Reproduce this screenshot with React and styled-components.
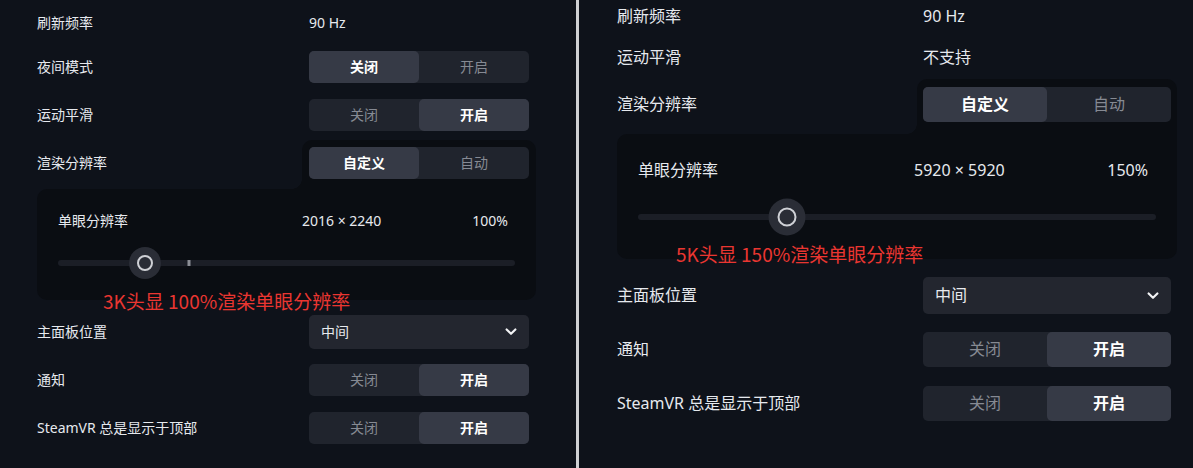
import React from 'react';
import styled, { createGlobalStyle, ThemeProvider } from 'styled-components';

const GlobalStyle = createGlobalStyle`
  html, body {
    margin: 0;
    padding: 0;
    background: #0e121a;
  }
  body {
    font-family: "Noto Sans", "Noto Sans CJK SC", sans-serif;
  }
`;

// metrics for each screenshot half
const compact = {
  font: 14,
  padTop: 11,
  padLeft: 37,
  gap: 16,
  textH: 24,
  labelW: 272,
  ctlW: 220,
  ctlH: 32,
  tabPad: 7,
  tabBelow: 10,
  side: 7,
  boxPadTop: 22,
  boxPadX: 21,
  boxPadBottom: 21,
  headH: 20,
  valueCol: 244,
  pctRight: 7,
  sliderGap: 16,
  thumb: 32,
  ring: 16,
};

const roomy = {
  font: 16,
  padTop: 5,
  padLeft: 38,
  gap: 19,
  textH: 22,
  labelW: 306,
  ctlW: 248,
  ctlH: 35,
  tabPad: 8,
  tabBelow: 12,
  side: 6,
  boxPadTop: 25,
  boxPadX: 21,
  boxPadBottom: 24,
  headH: 22,
  valueCol: 276,
  pctRight: 8,
  sliderGap: 17,
  thumb: 37,
  ring: 19,
};

const Screen = styled.div`
  display: flex;
  width: 1193px;
  height: 468px;
  overflow: hidden;
  background: #0e121a;
`;

const Panel = styled.section`
  flex: none;
  width: ${p => p.$width}px;
  box-sizing: border-box;
  padding: ${p => p.theme.padTop}px 0 0 ${p => p.theme.padLeft}px;
  display: flex;
  flex-direction: column;
  gap: ${p => p.theme.gap}px;
  font-size: ${p => p.theme.font}px;
  line-height: 1.3;
  color: #e6e9ee;
`;

const Divider = styled.div`
  flex: none;
  width: 3px;
  background: #cfd0d3;
`;

const Row = styled.div`
  display: flex;
  align-items: center;
  height: ${p => (p.$text ? p.theme.textH : p.theme.ctlH)}px;
`;

const Label = styled.div`
  flex: none;
  width: ${p => p.theme.labelW}px;
  white-space: nowrap;
`;

const TabLabel = styled(Label)`
  padding-bottom: ${p => p.theme.tabBelow - p.theme.tabPad}px;
`;

const Value = styled.div`
  white-space: nowrap;
`;

const Segmented = styled.div`
  flex: none;
  display: flex;
  width: ${p => p.theme.ctlW}px;
  height: ${p => p.theme.ctlH}px;
  background: #20242d;
  border-radius: 5px;
`;

const Segment = styled.div`
  flex: 1;
  display: flex;
  align-items: center;
  justify-content: center;
  border-radius: 5px;
  background: ${p => (p.$active ? '#363a46' : 'transparent')};
  color: ${p => (p.$active ? '#ffffff' : '#868a93')};
  font-weight: ${p => (p.$active ? 700 : 400)};
`;

const Select = styled.div`
  flex: none;
  width: ${p => p.theme.ctlW}px;
  height: ${p => p.theme.ctlH + 2}px;
  box-sizing: border-box;
  padding: 0 12px;
  display: flex;
  align-items: center;
  justify-content: space-between;
  background: #23262f;
  border-radius: 5px;
  color: #e8eaee;
`;

const ResGroup = styled.div`
  display: flex;
  flex-direction: column;
  margin-top: -${p => p.theme.tabPad}px;
`;

const TabRow = styled.div`
  display: flex;
  align-items: center;
`;

const Tab = styled.div`
  position: relative;
  flex: none;
  margin-left: -${p => p.theme.side}px;
  padding: ${p => p.theme.tabPad}px ${p => p.theme.side}px ${p => p.theme.tabBelow}px;
  background: #0a0d12;
  border-radius: 10px 10px 0 0;

  &::before {
    content: '';
    position: absolute;
    left: -10px;
    bottom: 0;
    width: 10px;
    height: 10px;
    background: radial-gradient(circle at 0 0, transparent 9.5px, #0a0d12 10px);
  }
`;

const Box = styled.div`
  position: relative;
  width: ${p => p.theme.labelW + p.theme.ctlW + p.theme.side}px;
  box-sizing: border-box;
  padding: ${p => p.theme.boxPadTop}px ${p => p.theme.boxPadX}px ${p => p.theme.boxPadBottom}px;
  background: #0a0d12;
  border-radius: 10px 0 10px 10px;
`;

const BoxHead = styled.div`
  display: grid;
  grid-template-columns: ${p => p.theme.valueCol}px 1fr auto;
  align-items: center;
  height: ${p => p.theme.headH}px;
  white-space: nowrap;
`;

const Percent = styled.div`
  padding-right: ${p => p.theme.pctRight}px;
`;

const Slider = styled.div`
  position: relative;
  display: flex;
  align-items: center;
  height: ${p => p.theme.thumb}px;
  margin-top: ${p => p.theme.sliderGap}px;
`;

const Track = styled.div`
  width: 100%;
  height: 6px;
  border-radius: 3px;
  background: #1b1e26;
`;

const Tick = styled.div`
  position: absolute;
  top: 50%;
  width: 3px;
  height: 6px;
  transform: translate(-50%, -50%);
  background: #8b8e95;
`;

const Thumb = styled.div`
  position: absolute;
  top: 50%;
  width: ${p => p.theme.thumb}px;
  height: ${p => p.theme.thumb}px;
  transform: translate(-50%, -50%);
  border-radius: 50%;
  background: #2a2d36;
  display: flex;
  align-items: center;
  justify-content: center;

  &::after {
    content: '';
    box-sizing: border-box;
    width: ${p => p.theme.ring}px;
    height: ${p => p.theme.ring}px;
    border: 2px solid #cfd1d6;
    border-radius: 50%;
  }
`;

const Note = styled.div`
  position: absolute;
  left: ${p => p.$left}px;
  top: ${p => p.$top}px;
  font-family: "Noto Sans CJK SC", sans-serif;
  font-size: 19px;
  line-height: 24px;
  color: #ea3631;
  white-space: nowrap;
`;

const Chevron = ({ size }) => (
  <svg width={size} height={size * 0.65} viewBox="0 0 12 8" fill="none">
    <polyline points="1.5,1.5 6,6 10.5,1.5" stroke="#f2f3f5" strokeWidth="2.2" strokeLinecap="round" strokeLinejoin="round" />
  </svg>
);

const Toggle = ({ on }) => (
  <Segmented>
    <Segment $active={!on}>关闭</Segment>
    <Segment $active={on}>开启</Segment>
  </Segmented>
);

const Resolution = ({ size, percent, thumbAt, tickAt, note, noteLeft, noteTop }) => (
  <ResGroup>
    <TabRow>
      <TabLabel>渲染分辨率</TabLabel>
      <Tab>
        <Segmented>
          <Segment $active>自定义</Segment>
          <Segment>自动</Segment>
        </Segmented>
      </Tab>
    </TabRow>
    <Box>
      <BoxHead>
        <span>单眼分辨率</span>
        <span>{size}</span>
        <Percent>{percent}</Percent>
      </BoxHead>
      <Slider>
        <Track />
        {tickAt != null && <Tick style={{ left: `${tickAt}%` }} />}
        <Thumb style={{ left: `${thumbAt}%` }} />
      </Slider>
      <Note $left={noteLeft} $top={noteTop}>{note}</Note>
    </Box>
  </ResGroup>
);

const Position = () => (
  <Row>
    <Label>主面板位置</Label>
    <Select>
      <span>中间</span>
      <Chevron size={12} />
    </Select>
  </Row>
);

export default function App() {
  return (
    <>
      <GlobalStyle />
      <Screen>
        <ThemeProvider theme={compact}>
          <Panel $width={576}>
            <Row $text>
              <Label>刷新频率</Label>
              <Value>90 Hz</Value>
            </Row>
            <Row>
              <Label>夜间模式</Label>
              <Toggle on={false} />
            </Row>
            <Row>
              <Label>运动平滑</Label>
              <Toggle on />
            </Row>
            <Resolution
              size="2016 × 2240"
              percent="100%"
              thumbAt={19}
              tickAt={28.7}
              note="3K头显 100%渲染单眼分辨率"
              noteLeft={66}
              noteTop={100}
            />
            <Position />
            <Row>
              <Label>通知</Label>
              <Toggle on />
            </Row>
            <Row>
              <Label>SteamVR 总是显示于顶部</Label>
              <Toggle on />
            </Row>
          </Panel>
        </ThemeProvider>
        <Divider />
        <ThemeProvider theme={roomy}>
          <Panel $width={614}>
            <Row $text>
              <Label>刷新频率</Label>
              <Value>90 Hz</Value>
            </Row>
            <Row $text>
              <Label>运动平滑</Label>
              <Value>不支持</Value>
            </Row>
            <Resolution
              size="5920 × 5920"
              percent="150%"
              thumbAt={28.7}
              note="5K头显 150%渲染单眼分辨率"
              noteLeft={59}
              noteTop={108}
            />
            <Position />
            <Row>
              <Label>通知</Label>
              <Toggle on />
            </Row>
            <Row>
              <Label>SteamVR 总是显示于顶部</Label>
              <Toggle on />
            </Row>
          </Panel>
        </ThemeProvider>
      </Screen>
    </>
  );
}
